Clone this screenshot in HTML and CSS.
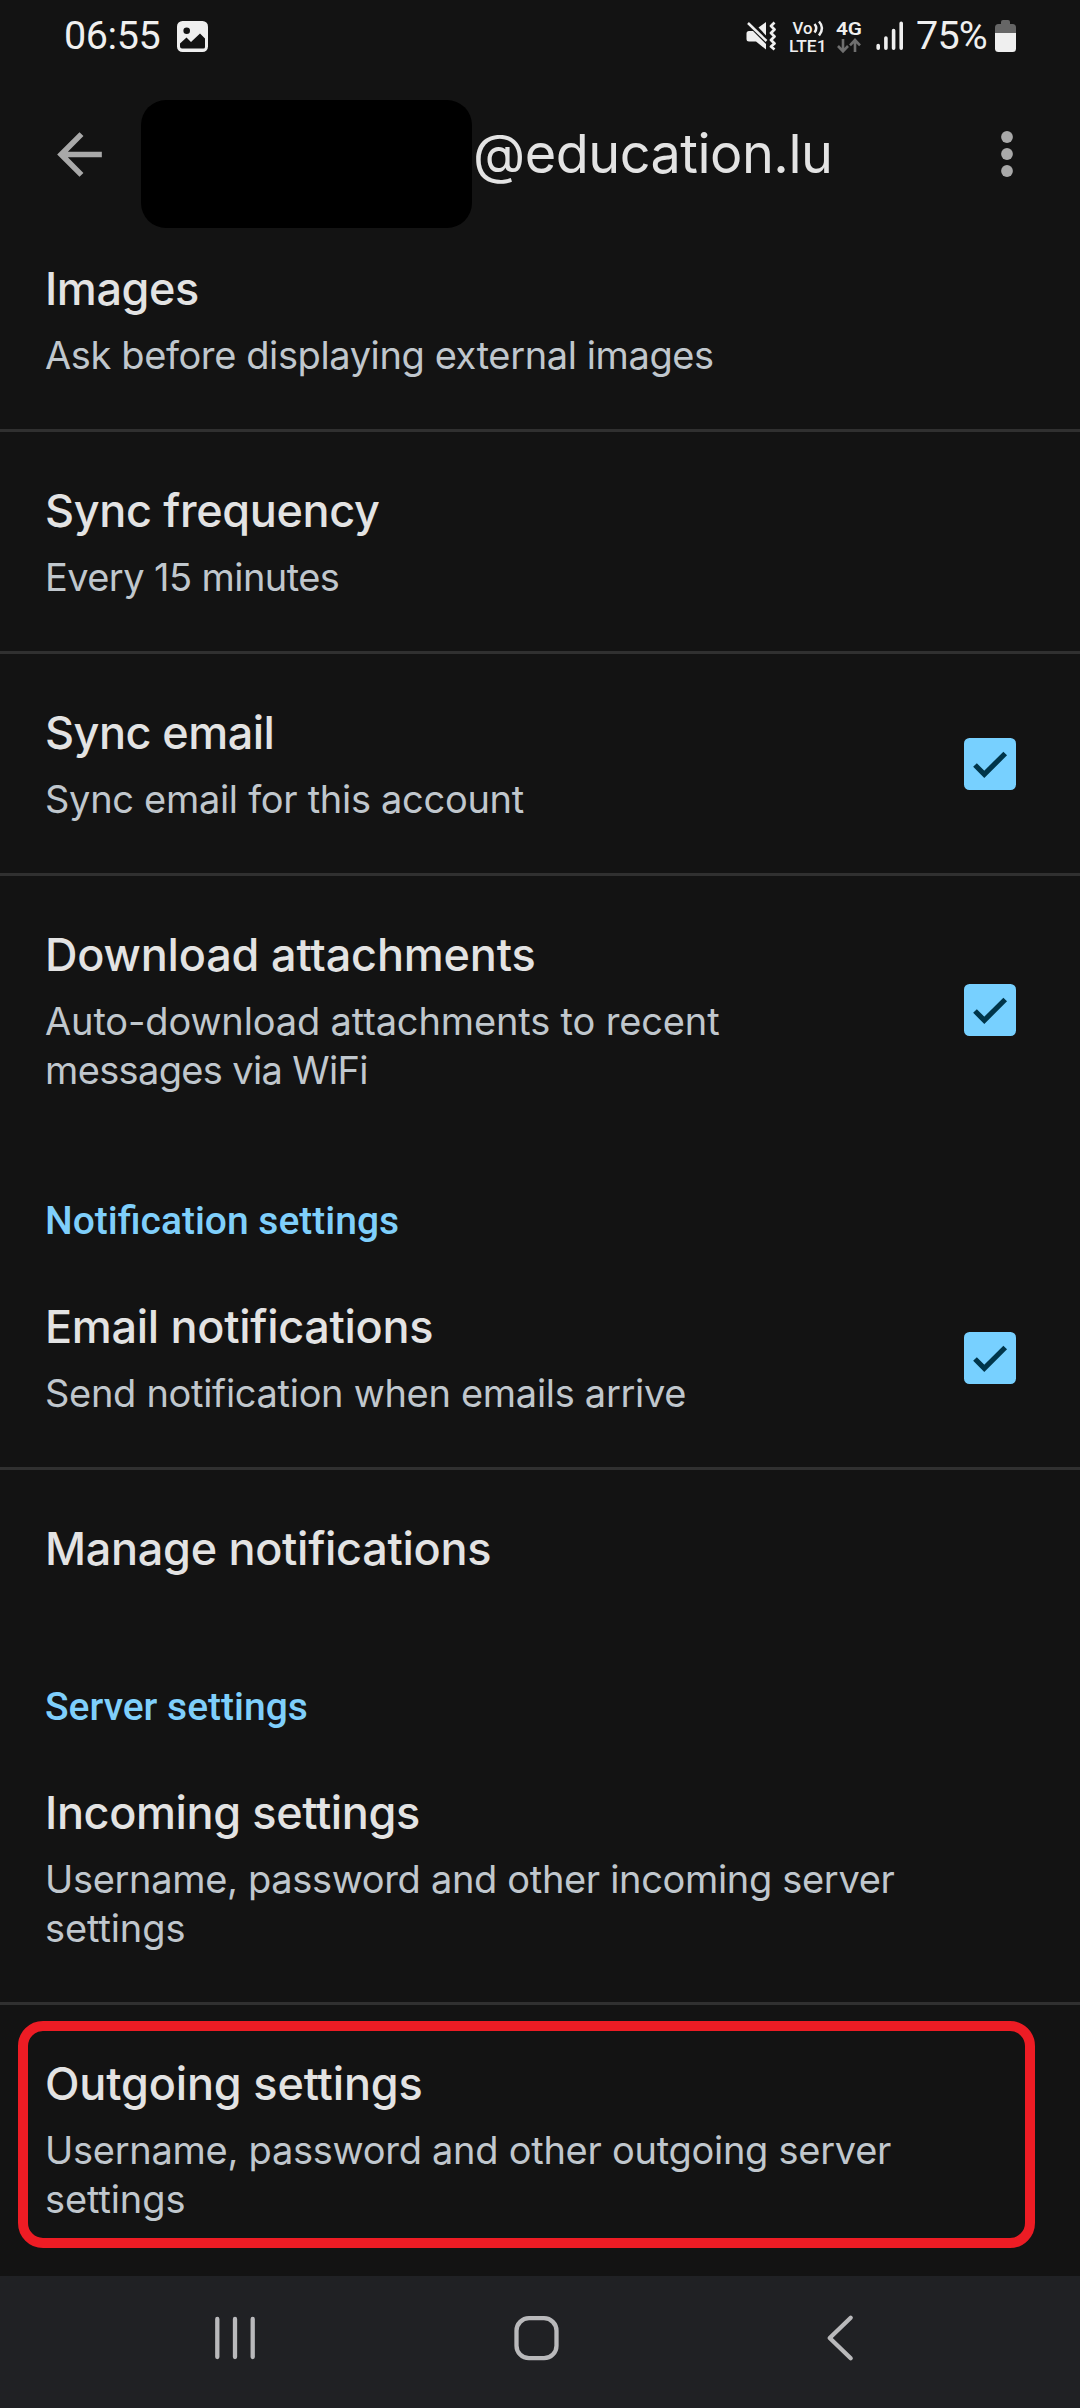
FILE: index.html
```html
<!DOCTYPE html>
<html lang="en">
<head>
<meta charset="utf-8">
<title>Account settings</title>
<link rel="stylesheet" href="styles.css">
</head>
<body>
<div class="screen">
  <header class="status">
    <span class="clock">06:55</span>
    <svg class="picture" width="31" height="31" viewBox="0 0 31 31">
      <rect width="31" height="31" rx="5.5" fill="#efefef"/>
      <circle cx="9.7" cy="9.7" r="3.3" fill="#131313"/>
      <path d="M3 22.5 9.5 16.5 14 21 23 12.5 28 17.5V26Q28 27.5 26.500 27.500H5Q3 27.500 3 25.500Z" fill="#131313"/>
    </svg>
    <svg class="mute" width="30" height="30" viewBox="0 0 30 30" fill="#efefef">
      <path d="M3 10H7L20 23V28.500L10 20.500H3Q0.500 20.500 0.500 18V12.500Q0.500 10 3 10Z"/>
      <path d="M12.500 6.500 20 1V14.500Z"/>
      <path d="M2 2 20.500 20" stroke="#efefef" stroke-width="2.500"/>
      <path d="M28.500 1.500 25 5 28.500 8.500 25 12 28.500 15.500 25 19 28.500 22.500 25 25.500 28.500 28.500" fill="none" stroke="#efefef" stroke-width="2.700" stroke-linejoin="round"/>
    </svg>
    <svg class="volte" width="38" height="44" viewBox="0 -5 38 44" fill="#efefef">
      <text x="3.500" y="14" textLength="20" lengthAdjust="spacingAndGlyphs">Vo</text>
      <path d="M25.500 4Q29 8 25.500 12.500M30 1.500Q36 8 30 15.500" fill="none" stroke="#efefef" stroke-width="2.500"/>
      <text x="0" y="31.500" textLength="37.500" lengthAdjust="spacingAndGlyphs">LTE1</text>
    </svg>
    <svg class="data" width="28" height="44" viewBox="0 -5 28 44" fill="#efefef">
      <text x="0" y="14.500" textLength="26" lengthAdjust="spacingAndGlyphs">4G</text>
      <path d="M7 19V31M2 26 7 31.300 12 26M19 32V20M14 25.300 19 20 24 25.300" fill="none" stroke="#6f6f6f" stroke-width="2.600"/>
    </svg>
    <svg class="signal" width="28" height="30" viewBox="0 0 28 30" stroke="#efefef" stroke-width="3.600" stroke-linecap="round">
      <path d="M2.200 24.500V27.300M9.900 17V27.300M17.600 9.500V27.300M25.200 2.300V27.300"/>
    </svg>
    <span class="charge">75%</span>
    <svg class="battery" width="21" height="32" viewBox="0 0 21 32">
      <path d="M6 4V2Q6 0 8 0H13Q15 0 15 2V4H17.500Q21 4 21 7.500V13H0V7.500Q0 4 3.500 4Z" fill="#666"/>
      <path d="M0 13H21V28.500Q21 32 17.500 32H3.500Q0 32 0 28.500Z" fill="#efefef"/>
    </svg>
  </header>

  <div class="appbar">
    <svg class="back" width="67" height="67" viewBox="0 0 24 24" fill="#a9a9a9">
      <path d="M20 11H7.830l5.590-5.590L12 4l-8 8 8 8 1.410-1.410L7.830 13H20v-2z"/>
    </svg>
    <div class="redacted"></div>
    <h1 class="account">@education.lu</h1>
    <svg class="more" width="12" height="48" viewBox="0 0 12 48" fill="#a9a9a9">
      <circle cx="6" cy="7" r="5.900"/><circle cx="6" cy="24" r="5.900"/><circle cx="6" cy="41" r="5.900"/>
    </svg>
  </div>

  <main class="list">
    <section class="row images">
      <div class="copy"><h2>Images</h2><p>Ask before displaying external images</p></div>
    </section>
    <section class="row divided frequency">
      <div class="copy"><h2>Sync frequency</h2><p>Every 15 minutes</p></div>
    </section>
    <section class="row divided email">
      <div class="copy"><h2>Sync email</h2><p>Sync email for this account</p></div>
      <svg class="check" viewBox="0 0 52 52"><rect width="52" height="52" rx="5.500" fill="#77d0ff"/><path d="M11 27 20.300 36.300 41.200 15.500" fill="none" stroke="#00354a" stroke-width="5.200"/></svg>
    </section>
    <section class="row divided attachments">
      <div class="copy"><h2>Download attachments</h2><p>Auto-download attachments to recent <span class="line">messages via WiFi</span></p></div>
      <svg class="check" viewBox="0 0 52 52"><rect width="52" height="52" rx="5.500" fill="#77d0ff"/><path d="M11 27 20.300 36.300 41.200 15.500" fill="none" stroke="#00354a" stroke-width="5.200"/></svg>
    </section>

    <h3>Notification settings</h3>
    <section class="row alerts">
      <div class="copy"><h2>Email notifications</h2><p>Send notification when emails arrive</p></div>
      <svg class="check" viewBox="0 0 52 52"><rect width="52" height="52" rx="5.500" fill="#77d0ff"/><path d="M11 27 20.300 36.300 41.200 15.500" fill="none" stroke="#00354a" stroke-width="5.200"/></svg>
    </section>
    <section class="row divided manage">
      <div class="copy"><h2>Manage notifications</h2></div>
    </section>

    <h3>Server settings</h3>
    <section class="row incoming">
      <div class="copy"><h2>Incoming settings</h2><p>Username, password and other incoming server <span class="line">settings</span></p></div>
    </section>
    <section class="row divided outgoing">
      <div class="copy"><h2>Outgoing settings</h2><p>Username, password and other outgoing server <span class="line">settings</span></p></div>
      <div class="highlight"></div>
    </section>
  </main>

  <nav class="navbar">
    <svg width="48" height="48" viewBox="0 0 48 48"><path d="M6.300 5V43M24 5V43M41.700 5V43" stroke-width="4.300"/></svg>
    <svg width="48" height="48" viewBox="0 0 48 48"><rect x="2.500" y="4.200" width="40" height="40" rx="12.500" stroke-width="4.300"/></svg>
    <svg width="48" height="48" viewBox="0 0 48 48"><path d="M33.700 3.800 12.700 24 33.700 44.300" stroke-width="4.300"/></svg>
  </nav>
</div>
</body>
</html>
```
FILE: styles.css
```css
* { box-sizing: border-box; margin: 0; padding: 0; }
body { background: #131313; }
svg { display: block; flex: none; }

.screen {
  display: flex;
  flex-direction: column;
  width: 1080px;
  height: 2408px;
  overflow: hidden;
  background: #131313;
  color: #e3e3e3;
  font-family: Inter, "Liberation Sans", sans-serif;
}

/* Status bar */
.status {
  display: flex;
  flex: none;
  height: 72px;
  padding: 0 64px 0 64px;
  color: #efefef;
  font: 400 39.5px/72px Roboto, sans-serif;
}
.status svg { margin-top: 20px; }
.status .picture { margin: 21px auto 0 17px; }
.clock { width: 96px; letter-spacing: -0.4px; }
.status .mute { margin-top: 21px; }
.status .volte { margin: 15px 0 0 13px; font: 500 17px Roboto, sans-serif; }
.status .data { margin: 15px 0 0 9px; font: 600 19px Roboto, sans-serif; }
.status .signal { margin: 21px 0 0 12px; }
.charge { width: 79px; margin-left: 12px; letter-spacing: -0.8px; }

/* App bar */
.appbar {
  display: flex;
  flex: none;
  align-items: center;
  height: 138px;
  padding: 26px 67px 0 46px;
}
.redacted {
  flex: none;
  width: 331px;
  height: 128px;
  margin: 20px 0 0 28px;
  border-radius: 25px;
  background: #000;
}
.account {
  flex: 1;
  margin-left: 1px;
  font-size: 54px;
  font-weight: 400;
  line-height: 64px;
  letter-spacing: -0.5px;
}

/* Settings list */
.list { flex: 1; }
.row {
  position: relative;
  display: flex;
  align-items: center;
  justify-content: space-between;
  padding: 49px 64px 49px 45px;
}
.divided { border-top: 3px solid #303030; }
.manage { padding-bottom: 51px; }
h2 { font-size: 45px; font-weight: 500; line-height: 60px; letter-spacing: -0.3px; }
p {
  margin-top: 12px;
  color: #c0c7cd;
  font-size: 38px;
  line-height: 49px;
  letter-spacing: -0.3px;
  white-space: nowrap;
}
.line { display: block; letter-spacing: 0; }
h3 {
  height: 104px;
  padding: 53px 0 0 45px;
  color: #7fcffb;
  font: 500 39px/48px Roboto, sans-serif;
}
.check { width: 52px; height: 52px; }

.images h2 { letter-spacing: -0.42px; }
.images p { letter-spacing: -0.39px; }
.frequency h2 { letter-spacing: -0.35px; }
.frequency p { letter-spacing: -0.58px; }
.email h2 { letter-spacing: -0.53px; }
.attachments h2 { letter-spacing: -0.17px; }
.attachments p { letter-spacing: -0.14px; }
.attachments .line { letter-spacing: -0.65px; }
.incoming h2 { letter-spacing: -0.38px; }
.incoming p { letter-spacing: -0.33px; }
.outgoing h2 { letter-spacing: -0.16px; }
.outgoing p { letter-spacing: -0.27px; }
.incoming .line, .outgoing .line { letter-spacing: -0.1px; }

/* Frame drawn over the outgoing row */
.highlight {
  position: absolute;
  top: 16px;
  left: 18px;
  width: 1017px;
  height: 227px;
  border: 10px solid #ed1c24;
  border-radius: 25px;
}

/* System navigation */
.navbar {
  display: grid;
  flex: none;
  grid-template-columns: repeat(3, 303px);
  justify-items: center;
  height: 132px;
  padding: 38px 0 0 83px;
  background: #202124;
}
.navbar svg { fill: none; stroke: #b9b9bb; stroke-linecap: round; stroke-linejoin: round; }
```
